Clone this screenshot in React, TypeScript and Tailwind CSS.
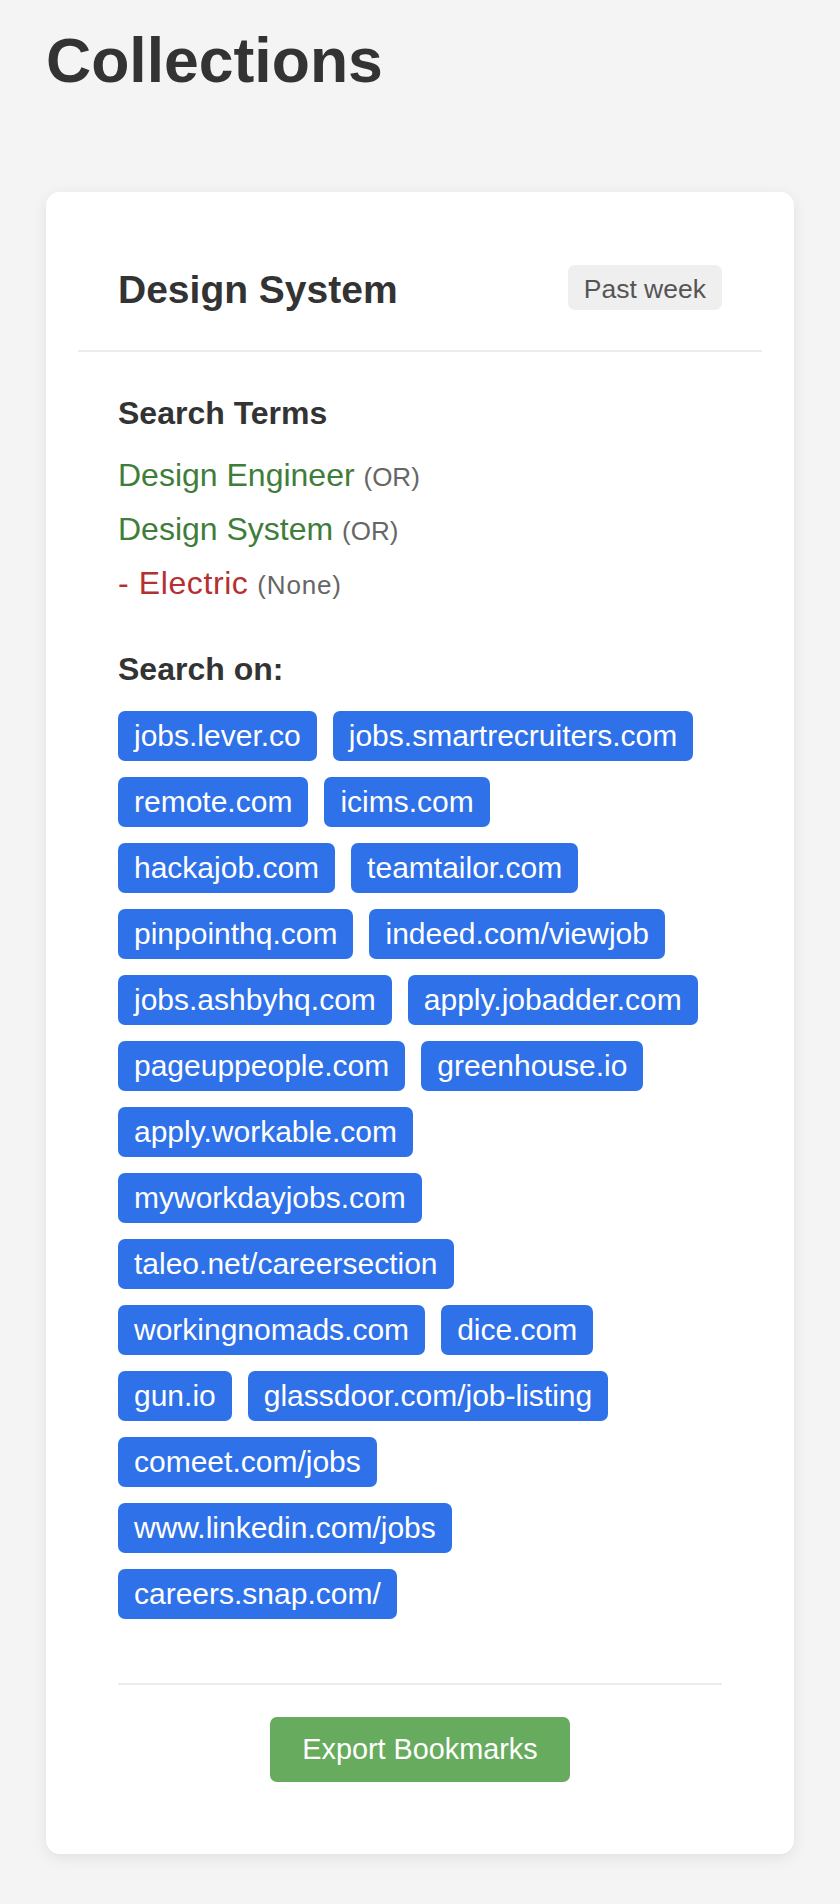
import React from "react";

const sites = [
  "jobs.lever.co",
  "jobs.smartrecruiters.com",
  "remote.com",
  "icims.com",
  "hackajob.com",
  "teamtailor.com",
  "pinpointhq.com",
  "indeed.com/viewjob",
  "jobs.ashbyhq.com",
  "apply.jobadder.com",
  "pageuppeople.com",
  "greenhouse.io",
  "apply.workable.com",
  "myworkdayjobs.com",
  "taleo.net/careersection",
  "workingnomads.com",
  "dice.com",
  "gun.io",
  "glassdoor.com/job-listing",
  "comeet.com/jobs",
  "www.linkedin.com/jobs",
  "careers.snap.com/",
];

const terms: { text: string; op: string; tone: "include" | "exclude" }[] = [
  { text: "Design Engineer", op: "(OR)", tone: "include" },
  { text: "Design System", op: "(OR)", tone: "include" },
  { text: "- Electric", op: "(None)", tone: "exclude" },
];

export default function App() {
  return (
    <div className="min-h-screen bg-[#f4f4f4] px-[46px] pt-[23px] pb-[50px] font-['Liberation_Sans',Arial,sans-serif] text-[#333333]">
      <h1 className="text-[62.5px] font-bold leading-[74px]">Collections</h1>

      <div className="mt-[95px] rounded-[14px] bg-white p-8 shadow-[0_4px_16px_rgba(0,0,0,0.08)]">
        <div className="flex items-center justify-between border-b-2 border-[#ececec] px-10 pt-[41px] pb-[40px]">
          <h2 className="pt-[5px] text-[39px] font-bold leading-[40px]">Design System</h2>
          <span className="rounded-[7px] bg-[#efefef] px-4 pt-[9px] pb-[5px] text-[26.5px] leading-[31px] text-[#555555]">
            Past week
          </span>
        </div>

        <div className="px-10 pt-[42.6px] pb-10">
          <h3 className="text-[32px] font-bold leading-[37px]">Search Terms</h3>
          <div className="mt-4">
            {terms.map((t) => (
              <div key={t.text} className="text-[32px] leading-[54px]">
                <span
                  className={
                    t.tone === "include"
                      ? "leading-none text-[#3f7d3a]"
                      : "leading-none tracking-[0.6px] text-[#b53030]"
                  }
                >
                  {t.text}
                </span>{" "}
                <span
                  className={
                    t.tone === "include"
                      ? "text-[26px] leading-none text-[#666666]"
                      : "text-[26px] leading-none tracking-[0.8px] text-[#666666]"
                  }
                >
                  {t.op}
                </span>
              </div>
            ))}
          </div>

          <h3 className="mt-[41px] text-[32px] font-bold leading-[37px]">Search on:</h3>
          <div className="mt-[23px] flex flex-wrap gap-4 pr-2">
            {sites.map((s) => (
              <span
                key={s}
                className="rounded-[7px] bg-[#2f71e9] px-4 py-2 text-[30px] leading-[34px] text-white"
              >
                {s}
              </span>
            ))}
          </div>

          <div className="mt-16 flex justify-center border-t-2 border-[#ececec] pt-8">
            <button className="rounded-[7px] bg-[#67ab5e] px-8 py-4 font-['Liberation_Sans',Arial,sans-serif] text-[28.8px] leading-[33px] text-white">
              Export Bookmarks
            </button>
          </div>
        </div>
      </div>
    </div>
  );
}
